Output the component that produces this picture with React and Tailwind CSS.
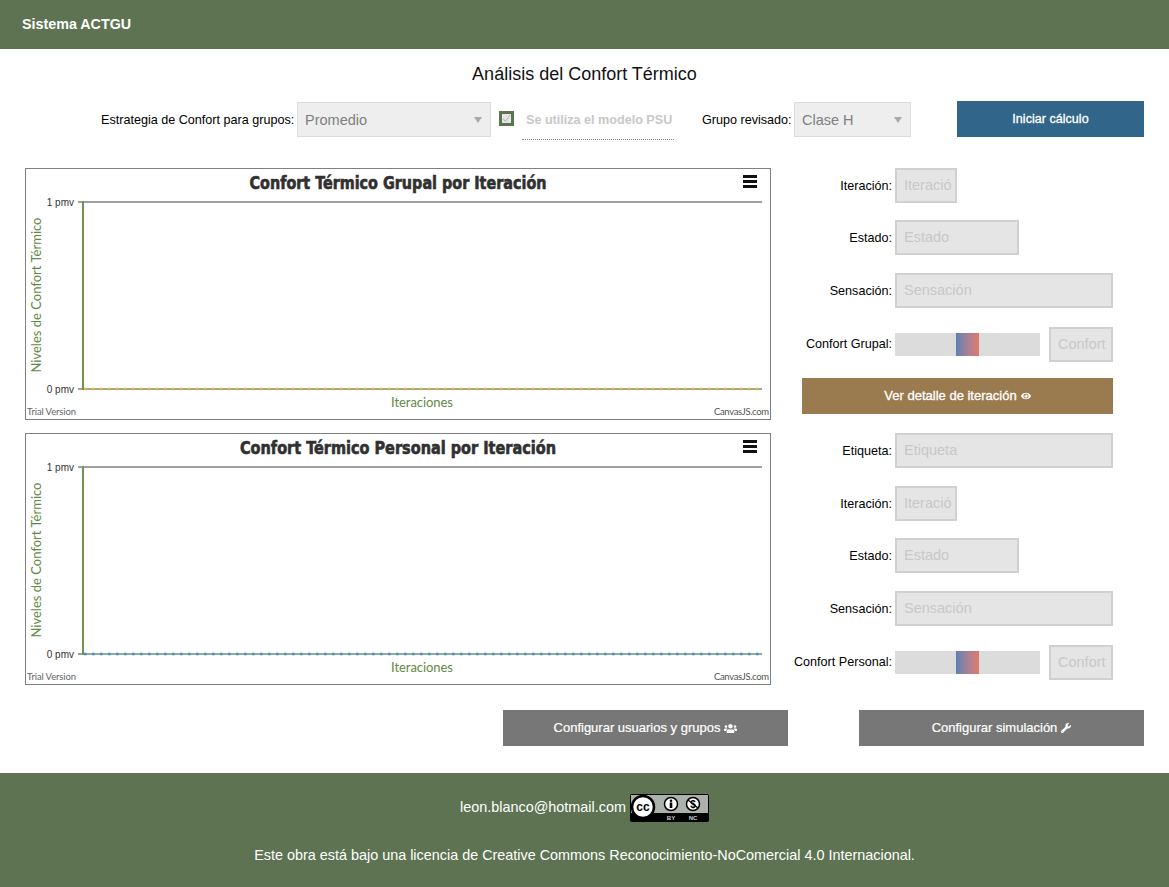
import { FaEye, FaUsers, FaWrench } from 'react-icons/fa';

const sans = '"Liberation Sans", Arial, sans-serif';
const chartFont = 'Lato, "Open Sans", sans-serif';

function FakeSelect({ value, width }) {
  return (
    <div className={`flex h-[35px] items-center justify-between border border-[#dcdcdc] bg-[#eeeeee] pl-[7px] pr-[8px] pt-[3px] text-[14.5px] text-[#808080] ${width}`}>
      <span>{value}</span>
      <svg width="8" height="6" viewBox="0 0 8 6" className="-mt-[3px]"><path d="M0 0h8L4 6z" fill="#aaaaaa" /></svg>
    </div>
  );
}

function Field({ label, placeholder, width, mt }) {
  return (
    <div className={`flex items-center ${mt}`}>
      <span className="w-[102px] pt-[2px] text-right text-[12.6px] text-black">{label}</span>
      <div className={`ml-[3px] flex h-[35px] items-center overflow-hidden whitespace-nowrap border-2 border-[#d0d0d0] bg-[#e5e5e5] pl-[7px] text-[14.5px] text-[#c8c8c8] ${width}`}>
        {placeholder}
      </div>
    </div>
  );
}

function SliderField({ label, mt }) {
  return (
    <div className={`flex items-center ${mt}`}>
      <span className="flex w-[102px] justify-end whitespace-nowrap text-[12.6px] text-black">{label}:</span>
      <div className="ml-[3px] flex h-[23px] w-[145px] bg-[#dcdcdc]">
        <div className="ml-[61px] h-full w-[23px] bg-gradient-to-r from-[#5b7fb8] to-[#e2786a]" />
      </div>
      <div className="ml-[9px] flex h-[35px] w-[64px] items-center overflow-hidden border-2 border-[#d0d0d0] bg-[#e5e5e5] pl-[7px] text-[14.5px] text-[#c8c8c8]">
        Confort
      </div>
    </div>
  );
}

function Chart({ title, titleWidth, dotColor }) {
  return (
    <div className="h-[252px] w-[746px] border border-[#808080] bg-white">
      <svg width="744" height="250" viewBox="0 0 744 250" className="block">
        <text x="372" y="20" textAnchor="middle" fontFamily='"DejaVu Sans Condensed", "DejaVu Sans", sans-serif' fontWeight="700" fontSize="18" fill="#303030" stroke="#303030" strokeWidth="0.6" textLength={titleWidth} lengthAdjust="spacingAndGlyphs">
          {title}
        </text>
        <rect x="717" y="6" width="14" height="3" fill="#111" />
        <rect x="717" y="11" width="14" height="3" fill="#111" />
        <rect x="717" y="16" width="14" height="3" fill="#111" />
        <line x1="52" y1="33" x2="736" y2="33" stroke="#a0a0a0" strokeWidth="2" />
        <line x1="52" y1="220" x2="57" y2="220" stroke="#a0a0a0" strokeWidth="2" />
        <line x1="57" y1="32" x2="57" y2="221" stroke="#6f9455" strokeWidth="2" />
        <line x1="56" y1="220" x2="736" y2="220" stroke="#76916a" strokeWidth="1.5" />
        <line x1="58" y1="220" x2="736" y2="220" stroke={dotColor} strokeWidth="2.5" strokeDasharray="2.5 5.5" />
        <text x="48" y="37" textAnchor="end" fontFamily={sans} fontSize="10" fill="#333">1 pmv</text>
        <text x="48" y="224" textAnchor="end" fontFamily={sans} fontSize="10" fill="#333">0 pmv</text>
        <text transform="translate(15 126) rotate(-90)" textAnchor="middle" fontFamily={chartFont} fontSize="13" fill="#5f8a45" textLength="155">Niveles de Confort Térmico</text>
        <text x="396" y="238" textAnchor="middle" fontFamily={chartFont} fontSize="13" fill="#5f8a45" textLength="62">Iteraciones</text>
        <text x="1" y="246" fontFamily={chartFont} fontSize="9.5" fill="#666" textLength="49">Trial Version</text>
        <text x="743" y="246" textAnchor="end" fontFamily={chartFont} fontSize="9.5" fill="#555" textLength="55">CanvasJS.com</text>
      </svg>
    </div>
  );
}

function CcBadge() {
  return (
    <svg width="79" height="28" viewBox="0 0 79 28" className="ml-[4px]">
      <rect width="79" height="28" rx="2" fill="#000" />
      <rect x="1" y="1" width="77" height="18" fill="#aab2ab" />
      <circle cx="13" cy="13" r="11" fill="#fff" stroke="#000" strokeWidth="2.5" />
      <text x="13" y="17" textAnchor="middle" fontFamily={sans} fontWeight="700" fontSize="12" fill="#000">cc</text>
      <circle cx="41" cy="10" r="6.5" fill="#fff" stroke="#000" strokeWidth="1.5" />
      <circle cx="41" cy="6.7" r="1.3" fill="#000" />
      <rect x="39.7" y="8.5" width="2.6" height="5.5" fill="#000" />
      <circle cx="63" cy="10" r="6.5" fill="#fff" stroke="#000" strokeWidth="1.5" />
      <text x="63" y="13.5" textAnchor="middle" fontFamily={sans} fontWeight="700" fontSize="10" fill="#000">$</text>
      <line x1="58" y1="6" x2="68" y2="14" stroke="#000" strokeWidth="1.3" />
      <text x="41" y="26" textAnchor="middle" fontFamily={sans} fontWeight="700" fontSize="6" fill="#ccc">BY</text>
      <text x="63" y="26" textAnchor="middle" fontFamily={sans} fontWeight="700" fontSize="6" fill="#ccc">NC</text>
    </svg>
  );
}

export default function App() {
  return (
    <div className="min-h-[887px] bg-white" style={{ fontFamily: sans }}>
      <header className="flex h-[49px] items-center bg-[#5e7352] pl-[22px] text-[14.3px] font-bold text-white">
        Sistema ACTGU
      </header>

      <h1 className="mt-[15px] text-center text-[18px] leading-[20px] text-[#111]">Análisis del Confort Térmico</h1>

      {/* barra de controles */}
      <div className="mt-[17px] flex h-[38px] items-start pl-[101px]">
        <span className="mt-[10px] w-[193px] whitespace-nowrap text-[12.6px] text-black">Estrategia de Confort para grupos:</span>
        <div className="ml-[3px] mt-[1px]">
          <FakeSelect value="Promedio" width="w-[194px]" />
        </div>
        <div className="ml-[8px] mt-[10px] flex h-[15px] w-[15px] items-center justify-center border-[3px] border-[#5e7352] bg-[#e5e5e5]">
          <svg width="9" height="9" viewBox="0 0 9 9" fill="none"><path d="M1 4.5l2.5 3L8 1" stroke="#b5b5b5" strokeWidth="1" /></svg>
        </div>
        <div className="ml-[8px] h-[39px] w-[152px] whitespace-nowrap border-b border-dotted border-[#888888] pl-[4px] pt-[10px] text-[12.6px] font-bold text-[#c8c8c8]">
          Se utiliza el modelo PSU
        </div>
        <span className="ml-[28px] mt-[10px] w-[89px] whitespace-nowrap text-[12.6px] text-black">Grupo revisado:</span>
        <div className="ml-[3px] mt-[1px]">
          <FakeSelect value="Clase H" width="w-[117px]" />
        </div>
        <button type="button" className="ml-[46px] h-[36px] w-[187px] bg-[#31668a] text-[12.6px] text-white [-webkit-text-stroke:0.3px_white]">
          Iniciar cálculo
        </button>
      </div>

      <div className="mt-[29px] flex items-start pl-[25px]">
        <div className="flex flex-col gap-[13px]">
          <Chart title="Confort Térmico Grupal por Iteración" titleWidth="297" dotColor="#f0b030" />
          <Chart title="Confort Térmico Personal por Iteración" titleWidth="316" dotColor="#3a8fd0" />
        </div>

        <div className="ml-[19px] flex flex-col">
          <Field label="Iteración:" placeholder="Iteració" width="w-[62px]" />
          <Field label="Estado:" placeholder="Estado" width="w-[124px]" mt="mt-[17px]" />
          <Field label="Sensación:" placeholder="Sensación" width="w-[218px]" mt="mt-[18px]" />
          <SliderField label="Confort Grupal" mt="mt-[19px]" />
          <button type="button" className="ml-[12px] mt-[16px] flex h-[36px] w-[311px] items-center justify-center gap-[4px] bg-[#9a7b4f] text-[13px] text-white [-webkit-text-stroke:0.3px_white]">
            Ver detalle de iteración <FaEye size={10} />
          </button>
          <Field label="Etiqueta:" placeholder="Etiqueta" width="w-[218px]" mt="mt-[19px]" />
          <Field label="Iteración:" placeholder="Iteració" width="w-[62px]" mt="mt-[18px]" />
          <Field label="Estado:" placeholder="Estado" width="w-[124px]" mt="mt-[17px]" />
          <Field label="Sensación:" placeholder="Sensación" width="w-[218px]" mt="mt-[18px]" />
          <SliderField label="Confort Personal" mt="mt-[19px]" />
        </div>
      </div>

      <div className="mt-[25px] flex pl-[503px]">
        <button type="button" className="flex h-[36px] w-[285px] items-center justify-center gap-[4px] bg-[#777777] text-[13px] text-white [-webkit-text-stroke:0.2px_white]">
          Configurar usuarios y grupos <FaUsers size={13} />
        </button>
        <button type="button" className="ml-[71px] flex h-[36px] w-[285px] items-center justify-center gap-[4px] bg-[#777777] text-[13px] text-white [-webkit-text-stroke:0.2px_white]">
          Configurar simulación <FaWrench size={10} />
        </button>
      </div>

      <footer className="mt-[27px] flex h-[114px] flex-col items-center bg-[#5e7352] text-white">
        <div className="mt-[21px] flex h-[28px] items-center text-[14.4px]">
          leon.blanco@hotmail.com
          <CcBadge />
        </div>
        <p className="mt-[24px] whitespace-nowrap text-[14.4px] leading-[18px]">
          Este obra está bajo una licencia de Creative Commons Reconocimiento-NoComercial 4.0 Internacional.
        </p>
      </footer>
    </div>
  );
}
